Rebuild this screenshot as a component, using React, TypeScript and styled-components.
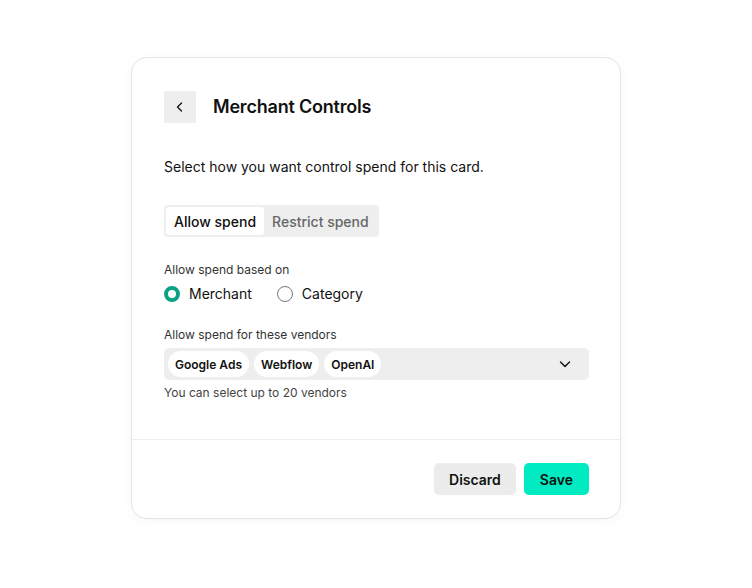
import React, { useState } from 'react'
import styled, { createGlobalStyle } from 'styled-components'

const vendors = ['Google Ads', 'Webflow', 'OpenAI']

function App() {
  const [mode, setMode] = useState<'allow' | 'restrict'>('allow')
  const [basis, setBasis] = useState<'merchant' | 'category'>('merchant')

  return (
    <>
      <GlobalStyle />
      <Page>
        <Card>
          <Body>
            <Header>
              <BackButton aria-label="Back">
                <svg width="12" height="12" viewBox="0 0 12 12" fill="none">
                  <path d="M7.5 2L3.5 6l4 4" stroke="#111" strokeWidth="1.3" strokeLinecap="round" strokeLinejoin="round" />
                </svg>
              </BackButton>
              <Title>Merchant Controls</Title>
            </Header>

            <Description>Select how you want control spend for this card.</Description>

            <Segmented>
              <Segment active={mode === 'allow'} onClick={() => setMode('allow')}>
                Allow spend
              </Segment>
              <Segment active={mode === 'restrict'} onClick={() => setMode('restrict')}>
                Restrict spend
              </Segment>
            </Segmented>

            <FieldLabel style={{ marginTop: 24 }}>Allow spend based on</FieldLabel>
            <RadioRow>
              <RadioOption onClick={() => setBasis('merchant')}>
                <RadioDot checked={basis === 'merchant'} />
                Merchant
              </RadioOption>
              <RadioOption onClick={() => setBasis('category')}>
                <RadioDot checked={basis === 'category'} />
                Category
              </RadioOption>
            </RadioRow>

            <FieldLabel style={{ marginTop: 22 }}>Allow spend for these vendors</FieldLabel>
            <Select>
              <Chips>
                {vendors.map(vendor => (
                  <Chip key={vendor}>{vendor}</Chip>
                ))}
              </Chips>
              <svg width="14" height="14" viewBox="0 0 14 14" fill="none">
                <path d="M2.5 5l4.5 4.5L11.5 5" stroke="#111" strokeWidth="1.4" strokeLinecap="round" strokeLinejoin="round" />
              </svg>
            </Select>
            <Helper>You can select up to 20 vendors</Helper>
          </Body>

          <Footer>
            <Button variant="secondary">Discard</Button>
            <Button variant="primary">Save</Button>
          </Footer>
        </Card>
      </Page>
    </>
  )
}

///////////////////////////////////////////////////////////////////////////////////

const GlobalStyle = createGlobalStyle`
  body {
    margin: 0;
    background: #fff;
    font-family: Inter, "Liberation Sans", sans-serif;
    color: #111;
  }
  * { box-sizing: border-box; }
`

const Page = styled.div`
  width: 752px;
  height: 588px;
  padding-top: 57px;
  padding-left: 131px;
`

const Card = styled.div`
  width: 490px;
  background: #fff;
  border: 1px solid #e6e6e6;
  border-radius: 16px;
  box-shadow: 0 2px 10px rgba(0, 0, 0, 0.04);
`

const Body = styled.div`
  padding: 33px 31px 37px 32px;
  display: flex;
  flex-direction: column;
  border-bottom: 1px solid #ededed;
`

const Header = styled.div`
  display: flex;
  align-items: center;
  gap: 17px;
`

const BackButton = styled.button`
  width: 32px;
  height: 32px;
  border: none;
  border-radius: 2px;
  background: #eeeeee;
  display: flex;
  align-items: center;
  justify-content: center;
  padding: 0;
  cursor: pointer;
`

const Title = styled.h1`
  margin: 0;
  font-size: 18px;
  font-weight: 600;
  letter-spacing: -0.2px;
  line-height: 26px;
`

const Description = styled.p`
  margin: 34px 0 0;
  font-size: 14px;
  line-height: 20px;
`

const Segmented = styled.div`
  margin-top: 28px;
  align-self: flex-start;
  display: flex;
  padding: 2px;
  background: #eeeeee;
  border-radius: 4px;
`

const Segment = styled.button<{ active: boolean }>`
  height: 28px;
  padding: 0 8px;
  border: none;
  border-radius: 3px;
  font-family: inherit;
  font-size: 14px;
  font-weight: 500;
  background: ${p => (p.active ? '#fff' : 'transparent')};
  color: ${p => (p.active ? '#111' : '#666')};
  cursor: pointer;
`

const FieldLabel = styled.div`
  font-size: 12px;
  line-height: 18px;
  color: #333;
`

const RadioRow = styled.div`
  margin-top: 5px;
  display: flex;
  gap: 25px;
`

const RadioOption = styled.label`
  display: flex;
  align-items: center;
  gap: 9px;
  font-size: 14px;
  line-height: 20px;
  cursor: pointer;
`

const RadioDot = styled.span<{ checked: boolean }>`
  width: 16px;
  height: 16px;
  border-radius: 50%;
  border: ${p => (p.checked ? '4px solid #0aa283' : '1px solid #777')};
  background: #fff;
`

const Select = styled.div`
  margin-top: 4px;
  height: 32px;
  padding: 0 17px 0 4px;
  background: #eeeeee;
  border-radius: 5px;
  display: flex;
  align-items: center;
  justify-content: space-between;
`

const Chips = styled.div`
  display: flex;
  gap: 5px;
`

const Chip = styled.span`
  height: 26px;
  padding: 0 7px;
  background: #fff;
  border-radius: 13px;
  display: flex;
  align-items: center;
  font-size: 12px;
  font-weight: 600;
`

const Helper = styled.div`
  margin-top: 4px;
  font-size: 12px;
  line-height: 18px;
  color: #444;
`

const Footer = styled.div`
  padding: 23px 31px 23px 32px;
  display: flex;
  justify-content: flex-end;
  gap: 8px;
`

const Button = styled.button<{ variant: 'primary' | 'secondary' }>`
  height: 32px;
  padding: 0 ${p => (p.variant === 'primary' ? 16 : 15)}px;
  border: none;
  border-radius: 5px;
  font-family: inherit;
  font-size: 14px;
  font-weight: 600;
  color: #111;
  background: ${p => (p.variant === 'primary' ? '#00ebc2' : '#ececec')};
  cursor: pointer;
`

export default App
